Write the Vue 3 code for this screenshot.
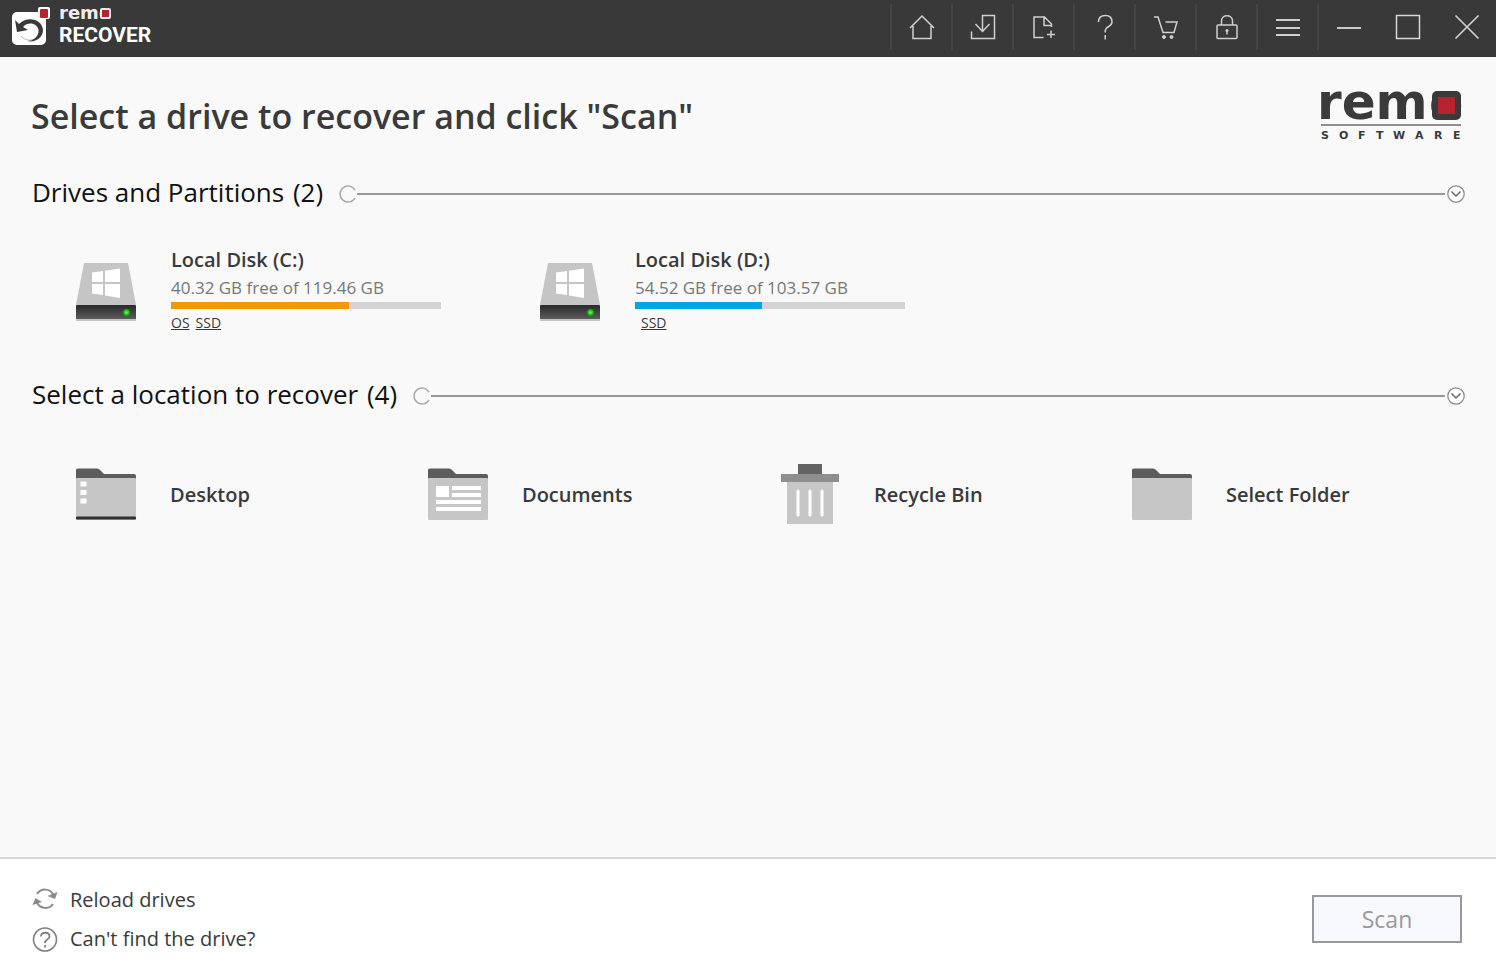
<script setup>
import { ref } from 'vue';

const tools = ['Home', 'Save session', 'New file', 'Help', 'Buy', 'Activate', 'Menu'];

const drivesOpen = ref(true);
const locationsOpen = ref(true);

// system tag comes first and stays empty on non-system drives
const drives = [
  { name: 'Local Disk (C:)', free: '40.32', total: '119.46', system: 'OS', type: 'SSD', color: 'orange' },
  { name: 'Local Disk (D:)', free: '54.52', total: '103.57', system: '', type: 'SSD', color: 'blue' },
];

const locations = ['Desktop', 'Documents', 'Recycle Bin', 'Select Folder'];

const usedPercent = (drive) => Math.round((1 - drive.free / drive.total) * 100);
</script>

<template>
  <div class="window">
    <header class="titlebar">
      <svg class="brand" width="160" height="56" viewBox="0 0 160 56">
        <rect x="12" y="12" width="34" height="33" rx="5" fill="#fff" />
        <path d="M15 20L19 24C26 16 42 18 43 30C43 38 35 43 27 41C35 40 39 36 38.500 30C37.500 23 28 21 23 27L28 30L17 32Z" fill="#393939" />
        <path d="M21 36Q25 41 32 40" fill="none" stroke="#bbb" stroke-width="1" />
        <rect x="38" y="7" width="12" height="12" rx="2" fill="#fff" />
        <rect x="40" y="9" width="8" height="9" rx="1" fill="#b8222d" />
        <rect x="100" y="8" width="11" height="11" rx="2" fill="#eee" />
        <text class="brand-remo" x="59" y="19">rem<tspan x="99">o</tspan></text>
        <rect x="102" y="10" width="7" height="7" fill="#b8222d" />
        <text class="brand-recover" x="59" y="42">RECOVER</text>
      </svg>

      <nav class="tools">
        <button v-for="tool in tools" :key="tool" class="tool" :aria-label="tool">
          <svg width="26" height="26" viewBox="0 0 26 26" fill="none" stroke="#d0d0d0" stroke-width="1.500">
            <path v-if="tool === 'Home'" d="M1 14L13 2L25 14M4 12V24.500H22V12" />
            <path v-else-if="tool === 'Save session'" d="M1.500 17.500V24.500H24.500V1.500H12.500V17M5.500 10L12.500 17.500L19.500 10" />
            <path v-else-if="tool === 'New file'" d="M12.500 23.500H3V3H13.500L20.500 10V13M13 3V11.500H20.500V10L13.500 3M20 16.500V24M16 20.500H24" />
            <g v-else-if="tool === 'Help'">
              <path d="M6.500 8C6.500 4 9 1.500 13.500 1.500S20 4.500 20 8C20 11.500 16.500 12.500 14.500 14C13.500 15 13.200 16 13.200 18.500" />
              <path d="M13.200 21V25.500" />
            </g>
            <g v-else-if="tool === 'Buy'">
              <path d="M1 3H5L10 18.500H21L24 8H12.500" />
              <circle cx="11" cy="23" r="1.500" fill="#d0d0d0" stroke-width="1" />
              <circle cx="18.500" cy="23" r="1.500" fill="#d0d0d0" stroke-width="1" />
            </g>
            <g v-else-if="tool === 'Activate'">
              <rect x="3" y="11" width="20" height="13.500" rx="1" />
              <path d="M7.500 11V7C7.500 0 18.500 0 18.500 7V11" />
              <circle cx="13" cy="16.500" r="1.500" fill="#d0d0d0" stroke="none" />
              <path d="M13 17V20.500" />
            </g>
            <path v-else d="M1 6H25M1 14H25M1 21H25" stroke-width="2" />
          </svg>
        </button>
        <button class="tool" aria-label="Minimize">
          <svg width="26" height="26" viewBox="0 0 26 26"><path d="M1 14H25" stroke="#c8c8c8" stroke-width="2" /></svg>
        </button>
        <button class="tool plain" aria-label="Maximize">
          <svg width="26" height="26" viewBox="0 0 26 26"><rect x="1.500" y="1.500" width="23" height="23" fill="none" stroke="#d8d8d8" stroke-width="1.500" /></svg>
        </button>
        <button class="tool plain" aria-label="Close">
          <svg width="26" height="26" viewBox="0 0 26 26"><path d="M1.500 1.500L24.500 24.500M24.500 1.500L1.500 24.500" stroke="#d0d0d0" stroke-width="1.700" /></svg>
        </button>
      </nav>
    </header>

    <main class="content">
      <div class="heading">
        <h1>Select a drive to recover and click "Scan"</h1>
        <svg class="logo" width="142" height="52" viewBox="0 0 142 52">
          <rect x="112" y="1" width="29" height="29" rx="5" fill="#3a3a3a" />
          <text class="logo-remo" x="-3" y="29">rem<tspan x="109">o</tspan></text>
          <rect x="118" y="7" width="17" height="17" fill="#b8222d" />
          <rect x="1" y="34" width="140" height="2" fill="#8f8f8f" />
          <text class="logo-software" x="1 19 38 56 73 95 114 133" y="49">SOFTWARE</text>
        </svg>
      </div>

      <section>
        <div class="section-head">
          <h2>Drives and Partitions <span class="count">(2)</span></h2>
          <svg class="refresh" width="18" height="18" viewBox="0 0 18 18"><path d="M16 5A8 8 0 1 0 16 13" fill="none" stroke="#aaa" stroke-width="1.500" /></svg>
          <div class="line"></div>
          <button class="toggle" aria-label="Toggle drives" @click="drivesOpen = !drivesOpen">
            <svg width="18" height="18" viewBox="0 0 18 18" fill="none"><circle cx="9" cy="9" r="8.200" fill="#fff" stroke="#888" stroke-width="1.200" /><path d="M4.500 6.500L9 11L13.500 6.500" stroke="#666" stroke-width="1.500" /></svg>
          </button>
        </div>
        <div v-if="drivesOpen" class="drives">
          <div v-for="drive in drives" :key="drive.name" class="drive">
            <svg class="drive-icon" width="60" height="60" viewBox="0 0 60 60">
              <defs>
                <linearGradient id="base" x1="0" y1="0" x2="0" y2="1">
                  <stop offset="0" stop-color="#292929" />
                  <stop offset="1" stop-color="#606060" />
                </linearGradient>
                <radialGradient id="led">
                  <stop offset="0" stop-color="#65ff55" />
                  <stop offset="0.600" stop-color="#14c914" />
                  <stop offset="1" stop-color="#14a514" stop-opacity="0.200" />
                </radialGradient>
              </defs>
              <path d="M8 1H52L60 43H0Z" fill="#c5c5c5" />
              <path d="M16 10.500L27 9V20H16ZM29 8.700L44 6.500V20H29ZM16 22H27V33L16 31.500ZM29 22H44V36L29 33.500Z" fill="#fff" />
              <rect y="43" width="60" height="15" rx="1" fill="url(#base)" />
              <rect y="57" width="60" height="2" fill="#c5c5c5" />
              <circle cx="50.500" cy="50.500" r="4" fill="url(#led)" />
            </svg>
            <div class="drive-info">
              <div class="drive-name">{{ drive.name }}</div>
              <div class="drive-free">{{ drive.free }} GB free of {{ drive.total }} GB</div>
              <div class="bar"><div class="fill" :class="drive.color" :style="{ width: usedPercent(drive) + '%' }"></div></div>
              <div class="tags">
                <span>{{ drive.system }}</span>
                <span>{{ drive.type }}</span>
              </div>
            </div>
          </div>
        </div>
      </section>

      <section>
        <div class="section-head">
          <h2>Select a location to recover <span class="count">(4)</span></h2>
          <svg class="refresh" width="18" height="18" viewBox="0 0 18 18"><path d="M16 5A8 8 0 1 0 16 13" fill="none" stroke="#aaa" stroke-width="1.500" /></svg>
          <div class="line"></div>
          <button class="toggle" aria-label="Toggle locations" @click="locationsOpen = !locationsOpen">
            <svg width="18" height="18" viewBox="0 0 18 18" fill="none"><circle cx="9" cy="9" r="8.200" fill="#fff" stroke="#888" stroke-width="1.200" /><path d="M4.500 6.500L9 11L13.500 6.500" stroke="#666" stroke-width="1.500" /></svg>
          </button>
        </div>
        <div v-if="locationsOpen" class="locations">
          <button v-for="place in locations" :key="place" class="location">
            <svg width="60" height="60" viewBox="0 0 60 60">
              <g v-if="place === 'Recycle Bin'">
                <rect x="18" y="0" width="24" height="11" fill="#636363" />
                <rect x="7" y="18" width="46" height="42" fill="#c6c6c6" />
                <rect x="1" y="10" width="58" height="8" fill="#8e8e8e" />
                <path d="M18 27V51M30 27V51M42 27V51" stroke="#fff" stroke-width="3" stroke-linecap="round" />
              </g>
              <g v-else>
                <path d="M0 16V6Q0 4.500 2 4.500H21Q23 4.500 24 6L28 10H58Q60 10 60 12V16Z" fill="#5c5c5c" />
                <rect y="14" width="60" height="42" rx="1" fill="#c6c6c6" />
                <g v-if="place === 'Desktop'">
                  <path d="M4.500 17.500H10.500V22.500H4.500ZM4.500 26H10.500V31H4.500ZM4.500 34.500H10.500V39.500H4.500Z" fill="#fff" />
                  <rect y="52.500" width="60" height="3" rx="1" fill="#303030" />
                </g>
                <g v-if="place === 'Documents'" fill="#fff">
                  <rect x="8" y="22" width="13" height="11" />
                  <rect x="24" y="22" width="29" height="4" />
                  <rect x="24" y="29" width="29" height="4" />
                  <rect x="8" y="36" width="45" height="4" />
                  <rect x="8" y="43" width="45" height="4" />
                </g>
              </g>
            </svg>
            <span>{{ place }}</span>
          </button>
        </div>
      </section>
    </main>

    <footer class="footer">
      <div class="links">
        <button class="link">
          <svg width="26" height="26" viewBox="0 0 26 26" fill="none" stroke="#8a8a8a" stroke-width="2">
            <path d="M5 7C9 1 18 1 21.500 8M21 17C17 23 8 22 4.500 15" />
            <path d="M25.500 5L23 12L15.500 9ZM0.500 18L3.500 11L10 15Z" fill="#8a8a8a" stroke="none" />
          </svg>
          Reload drives
        </button>
        <button class="link">
          <svg width="26" height="26" viewBox="0 0 26 26" fill="none" stroke="#808080" stroke-width="1.600">
            <circle cx="13" cy="13.500" r="11.500" />
            <path d="M9 10.500C9 5.500 17.500 5.500 17.500 10.500C17.500 13.500 13 13 13 17M13 19V21.500" stroke-width="1.800" />
          </svg>
          Can't find the drive?
        </button>
      </div>
      <button class="scan" disabled>Scan</button>
    </footer>
  </div>
</template>

<style>
body {
  margin: 0;
}
</style>

<style scoped>
.window {
  min-height: 100vh;
  display: flex;
  flex-direction: column;
  background-color: #f9f9f9;
  color: #3a3a3a;
  font-family: "Open Sans", "Noto Sans", sans-serif;
}

button {
  font: inherit;
  color: inherit;
  background: none;
  border: none;
  padding: 0;
}

svg {
  display: block;
  flex-shrink: 0;
  overflow: visible;
}

h1,
h2 {
  margin: 0;
}

.titlebar {
  display: flex;
  justify-content: space-between;
  height: 57px;
  background-color: #393939;
}

.brand-remo {
  font: bold 18px "DejaVu Sans", sans-serif;
  fill: #eee;
}

.brand-recover {
  font: bold 21px Roboto, sans-serif;
  fill: #fff;
}

.tools {
  display: flex;
  padding-top: 4px;
}

.tool {
  width: 61px;
  height: 46px;
  display: flex;
  align-items: center;
  justify-content: center;
  border-left: 2px solid #454545;
}

.tool.plain {
  width: 59px;
  border-left: none;
}

.content {
  flex: 1;
}

.heading {
  display: flex;
  justify-content: space-between;
  align-items: center;
  padding: 30px 34px 30px 31px;
}

h1 {
  font-size: 34px;
  line-height: 58px;
  font-weight: 600;
}

.logo-remo {
  font: bold 50px "DejaVu Sans", sans-serif;
  fill: #3a3a3a;
}

.logo-software {
  font: bold 11px "DejaVu Sans", sans-serif;
  fill: #3a3a3a;
}

.section-head {
  display: flex;
  align-items: center;
  height: 38px;
  padding: 0 31px 0 32px;
}

h2 {
  padding-bottom: 4px;
  color: #111;
  font-size: 26px;
  line-height: 34px;
  font-weight: 400;
}

.count {
  margin-left: 2px;
}

.refresh {
  margin-left: 16px;
}

.line {
  flex: 1;
  height: 2px;
  margin-right: 2px;
  background-color: #999;
}

.drives {
  display: grid;
  grid-template-columns: repeat(3, 1fr);
  padding: 33px 28px 40px 76px;
}

.drive {
  display: flex;
  gap: 35px;
}

.drive-icon {
  margin-top: 16px;
}

.drive-info {
  width: 270px;
}

.drive-name {
  font-size: 20px;
  line-height: 28px;
  font-weight: 600;
}

.drive-free {
  font-size: 17px;
  line-height: 28px;
  color: #777;
}

.bar {
  height: 7px;
  background-color: #d3d3d3;
}

.fill {
  height: 100%;
}

.orange {
  background-color: #f39800;
}

.blue {
  background-color: #00a5e8;
}

.tags {
  display: flex;
  gap: 6px;
  font-size: 14px;
  line-height: 28px;
  text-decoration: underline;
}

.locations {
  display: grid;
  grid-template-columns: repeat(4, 1fr);
  padding: 49px 12px 49px 76px;
}

.location {
  display: flex;
  align-items: center;
  gap: 34px;
  font-size: 20px;
  font-weight: 600;
}

.footer {
  display: flex;
  justify-content: space-between;
  align-items: center;
  padding: 21px 34px 16px 32px;
  background-color: #fff;
  border-top: 2px solid #d6d6d6;
}

.link {
  display: flex;
  align-items: center;
  gap: 12px;
  height: 39px;
  font-size: 20px;
}

.scan {
  width: 150px;
  height: 48px;
  font-size: 23px;
  color: #999;
  background-color: #f8f9ff;
  border: 2px solid #999;
}
</style>
